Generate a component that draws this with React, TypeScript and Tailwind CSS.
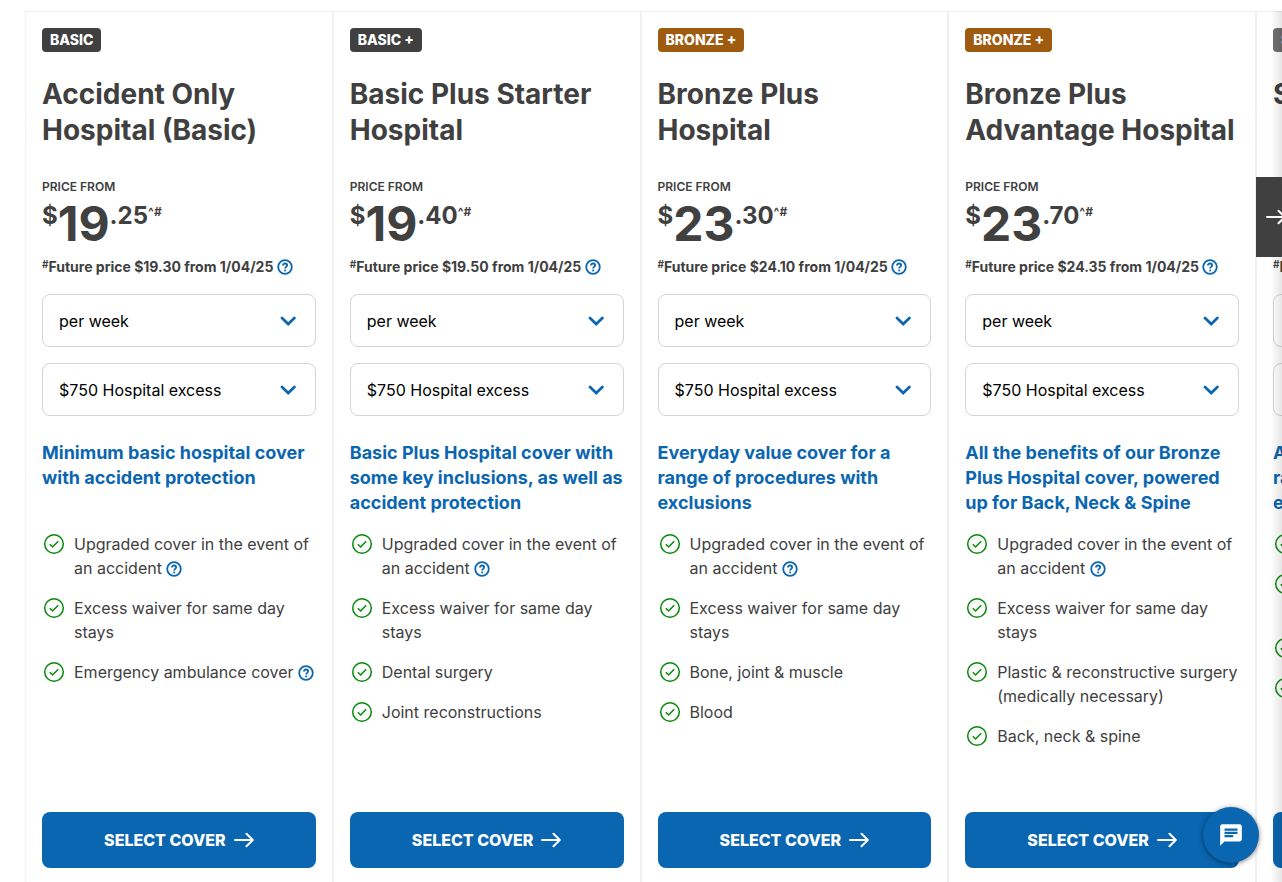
import { useState } from "react";
import { MdChat } from "react-icons/md";

type Feature = {
  text: string;
  hasInfo?: boolean;
};

type Cover = {
  id: string;
  tier: string;
  tierClass: string;
  title: string;
  dollars: string;
  cents: string;
  futurePrice: string;
  summary: string;
  features: Feature[];
};

const covers: Cover[] = [
  {
    id: "accident-only",
    tier: "BASIC",
    tierClass: "bg-[#404040]",
    title: "Accident Only Hospital (Basic)",
    dollars: "19",
    cents: ".25",
    futurePrice: "$19.30",
    summary: "Minimum basic hospital cover with accident protection",
    features: [
      { text: "Upgraded cover in the event of an accident", hasInfo: true },
      { text: "Excess waiver for same day stays" },
      { text: "Emergency ambulance cover", hasInfo: true },
    ],
  },
  {
    id: "basic-plus-starter",
    tier: "BASIC +",
    tierClass: "bg-[#404040]",
    title: "Basic Plus Starter Hospital",
    dollars: "19",
    cents: ".40",
    futurePrice: "$19.50",
    summary:
      "Basic Plus Hospital cover with some key inclusions, as well as accident protection",
    features: [
      { text: "Upgraded cover in the event of an accident", hasInfo: true },
      { text: "Excess waiver for same day stays" },
      { text: "Dental surgery" },
      { text: "Joint reconstructions" },
    ],
  },
  {
    id: "bronze-plus",
    tier: "BRONZE +",
    tierClass: "bg-[#9f5b0f]",
    title: "Bronze Plus Hospital",
    dollars: "23",
    cents: ".30",
    futurePrice: "$24.10",
    summary: "Everyday value cover for a range of procedures with exclusions",
    features: [
      { text: "Upgraded cover in the event of an accident", hasInfo: true },
      { text: "Excess waiver for same day stays" },
      { text: "Bone, joint & muscle" },
      { text: "Blood" },
    ],
  },
  {
    id: "bronze-plus-advantage",
    tier: "BRONZE +",
    tierClass: "bg-[#9f5b0f]",
    title: "Bronze Plus Advantage Hospital",
    dollars: "23",
    cents: ".70",
    futurePrice: "$24.35",
    summary:
      "All the benefits of our Bronze Plus Hospital cover, powered up for Back, Neck & Spine",
    features: [
      { text: "Upgraded cover in the event of an accident", hasInfo: true },
      { text: "Excess waiver for same day stays" },
      { text: "Plastic & reconstructive surgery (medically necessary)" },
      { text: "Back, neck & spine" },
    ],
  },
  {
    id: "silver-plus",
    tier: "SILVER +",
    tierClass: "bg-[#6f6f6f]",
    title: "Silver Plus",
    dollars: "30",
    cents: ".20",
    futurePrice: "$31.10",
    summary: "Advanced value cover for a range of procedures with exclusions",
    features: [
      { text: "Back, neck & spine" },
      { text: "Excess waiver for same day stays" },
      { text: "Dental surgery" },
      { text: "Blood" },
    ],
  },
];

const ArrowIcon = () => (
  <svg
    width="20"
    height="16"
    viewBox="0 0 20 16"
    fill="none"
    stroke="currentColor"
    strokeWidth="2"
    strokeLinecap="round"
    strokeLinejoin="round"
    className="shrink-0"
    aria-hidden="true"
  >
    <path d="M1 8h17.5M12.5 1.8 18.8 8l-6.3 6.2" />
  </svg>
);

const CheckIcon = () => (
  <svg
    width="24"
    height="24"
    viewBox="0 0 24 24"
    fill="none"
    stroke="#078a07"
    strokeWidth="1.5"
    className="shrink-0"
    aria-hidden="true"
  >
    <circle cx="12" cy="12" r="9.3" />
    <path d="m7.8 12.2 2.8 2.8 5.6-5.7" />
  </svg>
);

const InfoButton = ({ label }: { label: string }) => (
  <button
    type="button"
    aria-label={label}
    className="inline-block cursor-pointer align-[-3px] text-[#0a66b0]"
  >
    <svg
      width="16"
      height="16"
      viewBox="0 0 16 16"
      fill="none"
      stroke="currentColor"
      strokeWidth="1.8"
      className="block"
      aria-hidden="true"
    >
      <circle cx="8" cy="8" r="6.8" />
      <path d="M5.9 6.5c0-1.2.9-2 2.1-2s2.1.8 2.1 1.9c0 1.4-2 1.5-2 3.1" />
      <circle cx="8.1" cy="11.5" r="1" fill="currentColor" stroke="none" />
    </svg>
  </button>
);

type SelectFieldProps = {
  id: string;
  label: string;
  options: string[];
};

const SelectField = ({ id, label, options }: SelectFieldProps) => {
  const [value, setValue] = useState(options[0]);

  return (
    <div className="relative">
      <select
        id={id}
        aria-label={label}
        value={value}
        onChange={(e) => setValue(e.target.value)}
        className="block h-[53px] w-full appearance-none rounded-lg border border-[#d4d4d4] bg-white px-4 text-base text-black"
      >
        {options.map((option) => (
          <option key={option}>{option}</option>
        ))}
      </select>
      <svg
        width="16"
        height="10"
        viewBox="0 0 16 10"
        fill="none"
        stroke="#0a66b0"
        strokeWidth="2.7"
        strokeLinecap="round"
        className="pointer-events-none absolute top-[22px] right-5"
        aria-hidden="true"
      >
        <path d="m2 2 6.2 6 6.2-6" />
      </svg>
    </div>
  );
};

const CoverCard = ({ cover }: { cover: Cover }) => (
  <li className="flex shrink-0 basis-1/4 flex-col border-x border-t border-[#f0f0f0] px-4 pb-3.5 pt-4">
    <span
      className={`self-start rounded px-2 text-sm leading-6 font-extrabold text-white ${cover.tierClass}`}
    >
      {cover.tier}
    </span>

    <h2 className="mt-6 min-h-[72px] text-[28px] leading-9 font-bold">
      {cover.title}
    </h2>

    <p className="mt-8 text-xs leading-[14px] font-semibold">PRICE FROM</p>
    <p className="mt-2.5 flex h-12 items-start font-bold">
      <span className="text-2xl leading-6">$</span>
      <span className="text-5xl leading-10">{cover.dollars}</span>
      <span className="text-2xl leading-6">{cover.cents}</span>
      <span className="text-xs leading-4">^#</span>
    </p>
    <p className="mt-1 text-sm leading-[22px] font-bold">
      <span className="align-top text-[10px] leading-4">#</span>
      Future price {cover.futurePrice} from 1/04/25{" "}
      <InfoButton label="About the future price" />
    </p>

    <div className="mt-4 flex flex-col gap-4">
      <SelectField
        id={`${cover.id}-frequency`}
        label="Payment frequency"
        options={["per week", "per fortnight", "per month", "per year"]}
      />
      <SelectField
        id={`${cover.id}-excess`}
        label="Hospital excess"
        options={["$750 Hospital excess", "$500 Hospital excess"]}
      />
    </div>

    <p className="mt-6 min-h-[76px] text-lg leading-[25px] font-bold text-[#0a66b0]">
      {cover.summary}
    </p>

    <ul className="mt-4 mb-16 flex flex-1 flex-col gap-4">
      {cover.features.map((feature) => (
        <li key={feature.text} className="flex gap-2">
          <CheckIcon />
          <span>
            {feature.text}
            {feature.hasInfo && (
              <>
                {" "}
                <InfoButton label={`About ${feature.text}`} />
              </>
            )}
          </span>
        </li>
      ))}
    </ul>

    <button
      type="button"
      className="flex h-14 w-full cursor-pointer items-center justify-center gap-2 rounded-lg bg-[#0a66b0] font-extrabold text-white"
    >
      SELECT COVER
      <ArrowIcon />
    </button>
  </li>
);

const App = () => {
  return (
    <main className="relative min-h-screen overflow-hidden bg-white pt-[11px] pr-[26px] pl-[25px] font-['Inter',sans-serif] text-base text-[#404040]">
      <ul className="flex">
        {covers.map((cover) => (
          <CoverCard key={cover.id} cover={cover} />
        ))}
      </ul>

      <div className="pointer-events-none absolute top-[11px] right-0 bottom-0 w-3 bg-linear-to-l from-black/10 to-transparent" />
      <button
        type="button"
        aria-label="Next covers"
        className="absolute top-[177px] -right-3.5 flex h-20 w-10 cursor-pointer items-center justify-center bg-[#404040] text-white"
      >
        <ArrowIcon />
      </button>

      <button
        type="button"
        aria-label="Open chat"
        className="fixed right-[23px] bottom-[19px] flex size-14 cursor-pointer items-center justify-center rounded-full bg-[#0a66b0] text-white shadow-[0_1px_5px_rgba(0,0,0,0.5)]"
      >
        <MdChat size={26} />
      </button>
    </main>
  );
};

export default App;
